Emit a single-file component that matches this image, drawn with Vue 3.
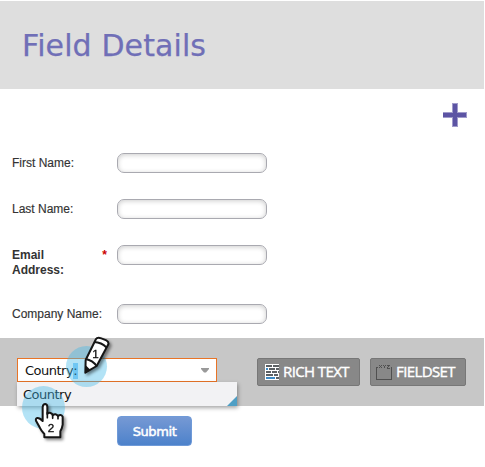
<script setup>
import { ref } from 'vue'

const fields = [
  { label: 'First Name:', required: false },
  { label: 'Last Name:', required: false },
  { label: 'Email Address:', required: true },
  { label: 'Company Name:', required: false },
]
const values = ref(fields.map(() => ''))
</script>

<template>
  <main class="editor">
    <header class="header"><h1>Field Details</h1></header>
    <div class="toolbar">
      <svg class="plus" width="24" height="24" viewBox="0 0 24 24" shape-rendering="crispEdges">
        <path d="M9 0h6v9h9v6h-9v9H9v-9H0V9h9z" fill="#a09bcb" />
        <path d="M10 1h4v9h9v4h-9v9h-4v-9H0v-4h10z" fill="#5c54a4" />
      </svg>
    </div>
    <form class="fields" @submit.prevent>
      <div v-for="(f, i) in fields" :key="f.label" class="row" :class="{ required: f.required }">
        <label><span>{{ f.label }}</span><b v-if="f.required" class="star">*</b></label>
        <input v-model="values[i]" type="text" />
      </div>
    </form>
    <section class="band">
      <div class="combo">
        <div class="box">
          <span class="word">Country<mark>:</mark></span>
          <svg class="arrow" width="8" height="5" viewBox="0 0 8 5"><path d="M0 0h8v1L5 4.5H3L0 1z" fill="#999" /></svg>
        </div>
        <div class="menu">
          <span class="word">Country</span>
          <i class="corner"></i>
        </div>
      </div>
      <button class="tool rich">
        <svg width="14" height="16" viewBox="0 0 14 16" shape-rendering="crispEdges">
          <path d="M0 0h14v16H0z" fill="#fff" />
          <path d="M1 1h6v2H1zM8 1h6v2H8zM4 4h6v2H4zM11 4h3v2h-3zM1 7h5v2H1zM7 7h5v2H7zM13 7h1v2h-1zM1 10h7v2H1zM9 10h4v2H9zM11 13h3v2h-3z" fill="#5c6064" />
          <path d="M1 4h2v2H1zM1 13h9v2H1z" fill="#3d89c4" />
        </svg>
        <span>RICH TEXT</span>
      </button>
      <button class="tool set">
        <svg width="16" height="16" viewBox="0 0 16 16" shape-rendering="crispEdges">
          <path d="M2 3H0v13h16V3h-1v12H1V4h1z" fill="#505050" />
          <path d="M3 1h1v1H3zM5 1h1v1H5zM4 2h1v1H4zM3 3h1v1H3zM5 3h1v1H5zM7 1h1v1H7zM9 1h1v1H9zM8 2h1v2H8zM11 1h3v1h-1v1h-1v1h2v1h-3V3h1V2h-1z" fill="#505050" />
        </svg>
        <span>FIELDSET</span>
      </button>
      <div class="halo one"></div>
      <svg class="pencil" width="60" height="60" viewBox="0 0 180 180">
        <path d="M108 27Q112 21 124 25L139 31Q147 35 145 43L110 108L76 128L77 90Z" fill="#fff" stroke="#161616" stroke-width="6" stroke-linejoin="round" />
        <path d="M102 36Q125 37 139 52M77 87Q98 91 110 108" fill="none" stroke="#161616" stroke-width="6" />
        <path d="M77 106L91 119L76 129Z" fill="#161616" />
        <text x="97" y="83">1</text>
      </svg>
      <div class="halo two"></div>
      <svg class="hand" width="60" height="60" viewBox="0 0 180 180">
        <path d="M83 123V81Q84 72 91 72Q97 73 97 81V102Q101 95 110 101Q113 103 113 106Q122 98 129 108Q138 101 143 110V134Q141 146 136 154V172H88V162Q79 153 74 142L63 122Q61 115 67 114Q73 113 83 123Z" fill="#fff" stroke="#161616" stroke-width="6" stroke-linejoin="round" />
        <path d="M97 98V113M113 105V115M129 107V116" fill="none" stroke="#161616" stroke-width="5" stroke-linecap="round" />
        <text x="98" y="155">2</text>
      </svg>
    </section>
    <button class="submit">Submit</button>
  </main>
</template>

<style>
body {
  background: #fff;
}
</style>

<style scoped>
.editor {
  box-sizing: border-box;
  width: 485px;
  height: 467px;
  padding-top: 1px;
  overflow: hidden;
  font-family: 'Liberation Sans', Arial, sans-serif;
}
.header {
  width: 484px;
  height: 88px;
  background: #dedede;
}
h1 {
  margin: 0;
  padding: 27px 0 0 22px;
  font: 400 30px/36px 'DejaVu Sans', Verdana, sans-serif;
  letter-spacing: 0.1px;
  color: #706fb7;
  -webkit-text-stroke: 0.25px #706fb7;
}
.toolbar {
  display: flex;
  justify-content: flex-end;
  height: 50px;
  padding: 14px 18px 0 0;
  box-sizing: border-box;
}
.fields {
  padding: 14px 0 0 12px;
  height: 199px;
  box-sizing: border-box;
}
.row {
  display: flex;
  align-items: flex-start;
  height: 46px;
}
.row.required {
  height: 59px;
}
label {
  display: flex;
  justify-content: space-between;
  box-sizing: border-box;
  width: 105px;
  padding: 3px 10px 0 0;
  font-size: 12px;
  line-height: 15px;
  color: #333;
  white-space: nowrap;
  -webkit-text-stroke: 0.15px currentColor;
}
.required label {
  font-weight: 700;
  -webkit-text-stroke: 0;
}
.required label span {
  width: 60px;
  white-space: normal;
}
.star {
  color: #c00;
}
input {
  box-sizing: border-box;
  width: 150px;
  height: 20px;
  margin: 0;
  border: 1px solid #a9a9b0;
  border-radius: 7px;
  background: #fff;
  box-shadow: inset 0 1px 5px rgba(0, 0, 0, 0.2);
}
.band {
  position: relative;
  display: flex;
  align-items: flex-start;
  width: 484px;
  height: 68px;
  padding: 20px 0 0 17px;
  box-sizing: border-box;
  background: #c7c7c7;
}
.combo {
  width: 240px;
  font: 13px/22px 'DejaVu Sans', Verdana, sans-serif;
  color: #111;
}
.box {
  display: flex;
  align-items: center;
  justify-content: space-between;
  box-sizing: border-box;
  width: 200px;
  height: 24px;
  padding: 1px 7px 0 7px;
  border: 1px solid #e87427;
  background: #fff;
}
.word {
  letter-spacing: -0.5px;
}
mark {
  display: inline-block;
  width: 5px;
  height: 16px;
  line-height: 16px;
  color: inherit;
  background: #8fd0fb;
}
.arrow {
  margin-top: -1px;
}
.menu {
  display: flex;
  justify-content: space-between;
  align-items: flex-end;
  width: 214px;
  height: 24px;
  padding-left: 6px;
  line-height: 23px;
  background: #f2f2f4;
  box-shadow: 1px 2px 4px rgba(0, 0, 0, 0.35);
}
.corner {
  width: 10px;
  height: 10px;
  background: #4f9fc5;
  clip-path: polygon(100% 0, 100% 100%, 0 100%);
}
.tool {
  display: flex;
  align-items: center;
  box-sizing: border-box;
  height: 28px;
  margin: 0;
  padding: 0 0 0 7px;
  border: 1px solid #777;
  border-radius: 2px;
  background: #888;
  color: #fff;
  font: 15px/24px 'Open Sans', sans-serif;
  white-space: nowrap;
  -webkit-text-stroke: 0.4px #fff;
}
.tool span {
  margin: 0 0 2px 4px;
}
.rich {
  width: 103px;
  letter-spacing: -0.6px;
}
.set {
  width: 96px;
  margin-left: 10px;
  padding-left: 5px;
  letter-spacing: -0.6px;
}
.halo {
  position: absolute;
  border-radius: 50%;
  background: rgba(65, 185, 232, 0.4);
}
.one {
  left: 66px;
  top: 8px;
  width: 41px;
  height: 41px;
}
.two {
  left: 22px;
  top: 48px;
  width: 43px;
  height: 43px;
}
.pencil,
.hand {
  position: absolute;
  overflow: visible;
  filter: drop-shadow(2px 2px 1.5px rgba(0, 0, 0, 0.45));
}
.pencil {
  left: 60px;
  top: -8px;
}
.hand {
  left: 15px;
  top: 42px;
}
text {
  font: 35px 'Liberation Sans', Arial, sans-serif;
  fill: #111;
  stroke: #111;
  stroke-width: 1px;
}
.submit {
  display: block;
  box-sizing: border-box;
  width: 75px;
  height: 30px;
  margin: 10px 0 0 117px;
  padding: 1px 0 0;
  border: 1px solid #6f9ad8;
  border-radius: 4px;
  background: linear-gradient(#7699d4, #4d82cb);
  color: #fff;
  font: 400 13px/27px 'DejaVu Sans', Verdana, sans-serif;
  letter-spacing: -0.4px;
  -webkit-text-stroke: 0.5px #fff;
}
</style>
